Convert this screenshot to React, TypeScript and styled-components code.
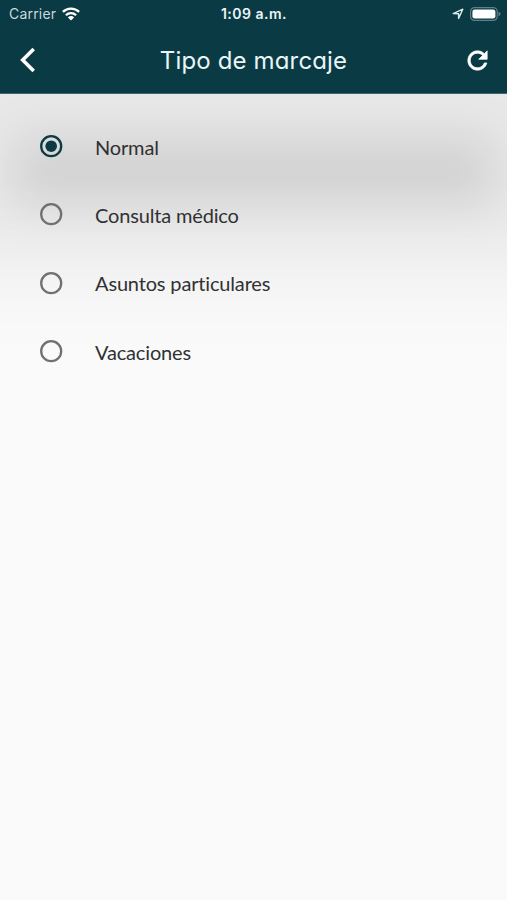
import React, { useState } from "react";
import styled, { createGlobalStyle } from "styled-components";

const GlobalStyle = createGlobalStyle`
  * { box-sizing: border-box; }
  body { margin: 0; background: #fafafa; }
`;

const Screen = styled.div`
  width: 507px;
  height: 900px;
  overflow: hidden;
  display: flex;
  flex-direction: column;
  background: #fafafa;
  font-family: Lato, sans-serif;
`;

const Header = styled.header`
  flex: none;
  height: 94px;
  background: #0a3a43;
  border-bottom: 1px solid #42666d;
  color: #e9f5f8;
  position: relative;
  z-index: 1;
`;

const StatusBar = styled.div`
  height: 27px;
  display: grid;
  grid-template-columns: 1fr auto 1fr;
  align-items: center;
  padding: 0 6px 0 9px;
  font-family: Inter, sans-serif;
  font-size: 14px;
  line-height: 27px;
`;

const Carrier = styled.div`
  display: flex;
  align-items: center;
  gap: 6px;
  letter-spacing: 0.2px;
  color: #c9d9dd;
`;

const Clock = styled.div`
  font-weight: 600;
  letter-spacing: 0.5px;
  padding-right: 2px;
`;

const Indicators = styled.div`
  display: flex;
  align-items: center;
  justify-content: flex-end;
  gap: 6px;
`;

const TitleBar = styled.div`
  height: 66px;
  display: grid;
  grid-template-columns: 56px 1fr 56px;
  align-items: center;
`;

const IconButton = styled.button`
  border: 0;
  padding: 0;
  background: none;
  color: #fff;
  height: 56px;
  display: grid;
  place-items: center;
`;

const RefreshButton = styled(IconButton)`
  padding-right: 3px;
`;

const Title = styled.h1`
  margin: 0;
  padding-top: 2px;
  text-align: center;
  font-family: Inter, sans-serif;
  font-feature-settings: "cv11";
  font-weight: 400;
  font-size: 24px;
  line-height: 64px;
  letter-spacing: 0.15px;
  white-space: nowrap;
`;

const Content = styled.main`
  position: relative;
  flex: 1;
  padding-top: 18.4px;
`;

const Shade = styled.div`
  position: absolute;
  pointer-events: none;
`;

const AmbientShade = styled(Shade)`
  left: -150px;
  right: -150px;
  top: -190px;
  height: 362px;
  background: rgba(0, 0, 0, 0.07);
  filter: blur(43px);
`;

const CastShade = styled(Shade)`
  left: 14px;
  right: 14px;
  top: 42px;
  height: 70px;
  background: rgba(0, 0, 0, 0.09);
  filter: blur(23px);
`;

const Option = styled.label`
  position: relative;
  display: flex;
  align-items: center;
  gap: 32px;
  height: 68.4px;
  padding-left: 40px;
  font-size: 20px;
  color: #303133;
`;

const NativeRadio = styled.input`
  position: absolute;
  opacity: 0;
`;

const RadioMark = styled.svg<{ $on: boolean }>`
  flex: none;
  width: 23px;
  height: 23px;
  color: ${(p) => (p.$on ? "#0a3a43" : "#707070")};
`;

const Label = styled.span`
  line-height: 24px;
  letter-spacing: -0.16px;
  font-variant-ligatures: none;
`;

const options = ["Normal", "Consulta médico", "Asuntos particulares", "Vacaciones"];

const Radio = ({ on }: { on: boolean }) => (
  <RadioMark $on={on} viewBox="0 0 23 23">
    <circle cx="11.2" cy="11.2" r="10" fill="none" stroke="currentColor" strokeWidth="2.3" />
    {on && <circle cx="11.2" cy="11.2" r="5.8" fill="currentColor" />}
  </RadioMark>
);

const WifiIcon = () => (
  <svg width="18" height="14" viewBox="0 0 18 14" fill="none" stroke="#fff" strokeWidth="2.3">
    <path d="M0.9 4.9A11.5 11.5 0 0 1 17.1 4.9" />
    <path d="M3.9 8.2A7.3 7.3 0 0 1 14.1 8.2" />
    <path d="M9 13.5L5.9 10.4A4.4 4.4 0 0 1 12.1 10.4Z" fill="#fff" stroke="none" />
  </svg>
);

const LocationIcon = () => (
  <svg width="12" height="12" viewBox="0 0 12 12" fill="none" stroke="#dce9ec" strokeWidth="1.4" strokeLinejoin="round">
    <path d="M1.2 5.6L10.8 1.2L6.6 10.4V5.8Z" />
  </svg>
);

const BatteryIcon = () => (
  <svg width="31" height="14" viewBox="0 0 31 14">
    <rect x="0.6" y="0.6" width="26.6" height="12.8" rx="4" fill="none" stroke="#5f8087" strokeWidth="1.2" />
    <rect x="2.4" y="2.4" width="23" height="9.2" rx="2.4" fill="#fff" />
    <path d="M28.5 4.8Q30.6 5.4 30.6 7T28.5 9.2Z" fill="#5f8087" />
  </svg>
);

const BackIcon = () => (
  <svg width="24" height="28" viewBox="0 0 24 28" fill="none" stroke="currentColor" strokeWidth="3.6">
    <path d="M17.7 3L6.7 14L17.7 25" />
  </svg>
);

const RefreshIcon = () => (
  <svg width="29" height="29" viewBox="0 0 24 24" fill="currentColor">
    <path d="M17.65 6.35C16.2 4.9 14.21 4 12 4c-4.42 0-7.99 3.58-7.99 8s3.57 8 7.99 8c3.73 0 6.84-2.55 7.73-6h-2.08c-.82 2.33-3.04 4-5.65 4-3.31 0-6-2.69-6-6s2.69-6 6-6c1.66 0 3.14.69 4.22 1.78L13 11h7V4l-2.35 2.35z" stroke="currentColor" strokeWidth="0.6" />
  </svg>
);

export default function App() {
  const [selected, setSelected] = useState(options[0]);
  return (
    <Screen>
      <GlobalStyle />
      <Header>
        <StatusBar>
          <Carrier>
            <span>Carrier</span>
            <WifiIcon />
          </Carrier>
          <Clock>1:09 a.m.</Clock>
          <Indicators>
            <LocationIcon />
            <BatteryIcon />
          </Indicators>
        </StatusBar>
        <TitleBar>
          <IconButton aria-label="Volver">
            <BackIcon />
          </IconButton>
          <Title>Tipo de marcaje</Title>
          <RefreshButton aria-label="Actualizar">
            <RefreshIcon />
          </RefreshButton>
        </TitleBar>
      </Header>
      <Content>
        <AmbientShade />
        <CastShade />
        {options.map((name) => (
          <Option key={name}>
            <NativeRadio type="radio" name="marcaje" checked={selected === name} onChange={() => setSelected(name)} />
            <Radio on={selected === name} />
            <Label>{name}</Label>
          </Option>
        ))}
      </Content>
    </Screen>
  );
}
